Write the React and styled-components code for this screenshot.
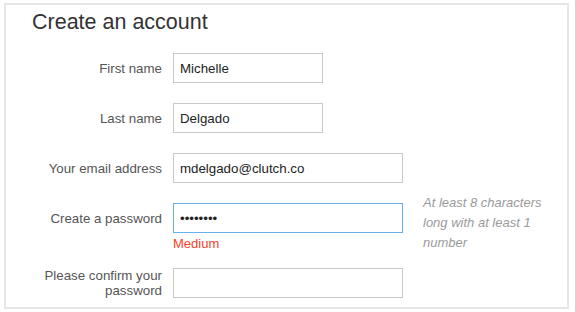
import React from "react";
import styled, { createGlobalStyle } from "styled-components";

const Global = createGlobalStyle`
  html, body { margin: 0; padding: 0; background: #ffffff; }
  body { font-family: "Liberation Sans", Arial, sans-serif; -webkit-font-smoothing: antialiased; }
  * { box-sizing: border-box; }
`;

const Panel = styled.section`
  margin: 3px 6px 0 4px;
  border: 2px solid #e6e6e6;
  background: #fff;
  padding: 4px 0 9px 26px;
`;

const Title = styled.h1`
  margin: 0 0 18px 0;
  font-size: 21.5px;
  line-height: 26px;
  font-weight: 400;
  color: #333;
`;

const Form = styled.form`
  display: flex;
  flex-direction: column;
`;

const Row = styled.div`
  display: grid;
  grid-template-columns: 130px 230px 130px;
  column-gap: 11px;
  align-items: start;
  margin-bottom: ${(p) => p.$after ?? 20}px;
  & > :nth-child(3) { margin-left: 9px; }
`;

const Label = styled.label`
  height: 30px;
  display: flex;
  align-items: center;
  justify-content: flex-end;
  text-align: right;
  font-size: 13.3px;
  line-height: 15px;
  color: #555;
`;

const Field = styled.div`
  display: flex;
  flex-direction: column;
`;

const Input = styled.input`
  width: ${(p) => p.$w}px;
  height: 30px;
  margin: 0;
  padding: 0 6px;
  border: 1px solid ${(p) => (p.$focus ? "#68b1ea" : "#c9c9c9")};
  border-radius: 0;
  background: #fff;
  font-family: "Liberation Sans", Arial, sans-serif;
  font-size: 13.3px;
  color: #222;
  outline: none;
`;

const Strength = styled.span`
  margin-top: 3px;
  font-size: 13px;
  line-height: 15px;
  color: #f5432b;
`;

const Hint = styled.p`
  margin: -10px 0 -10px 0;
  font-size: 13px;
  line-height: 20px;
  font-style: italic;
  color: #9a9a9a;
`;

export default function App() {
  return (
    <>
      <Global />
      <Panel>
        <Title>Create an account</Title>
        <Form onSubmit={(e) => e.preventDefault()}>
          <Row>
            <Label htmlFor="fn">First name</Label>
            <Field>
              <Input id="fn" $w={150} defaultValue="Michelle" />
            </Field>
          </Row>
          <Row>
            <Label htmlFor="ln">Last name</Label>
            <Field>
              <Input id="ln" $w={150} defaultValue="Delgado" />
            </Field>
          </Row>
          <Row>
            <Label htmlFor="em">Your email address</Label>
            <Field>
              <Input id="em" $w={230} defaultValue="mdelgado@clutch.co" />
            </Field>
          </Row>
          <Row $after={17}>
            <Label htmlFor="pw">Create a password</Label>
            <Field>
              <Input id="pw" type="password" $w={230} $focus defaultValue="12345678" />
              <Strength>Medium</Strength>
            </Field>
            <Hint>At least 8 characters long with at least 1 number</Hint>
          </Row>
          <Row $after={0}>
            <Label htmlFor="pc">Please confirm your password</Label>
            <Field>
              <Input id="pc" type="password" $w={230} />
            </Field>
          </Row>
        </Form>
      </Panel>
    </>
  );
}
